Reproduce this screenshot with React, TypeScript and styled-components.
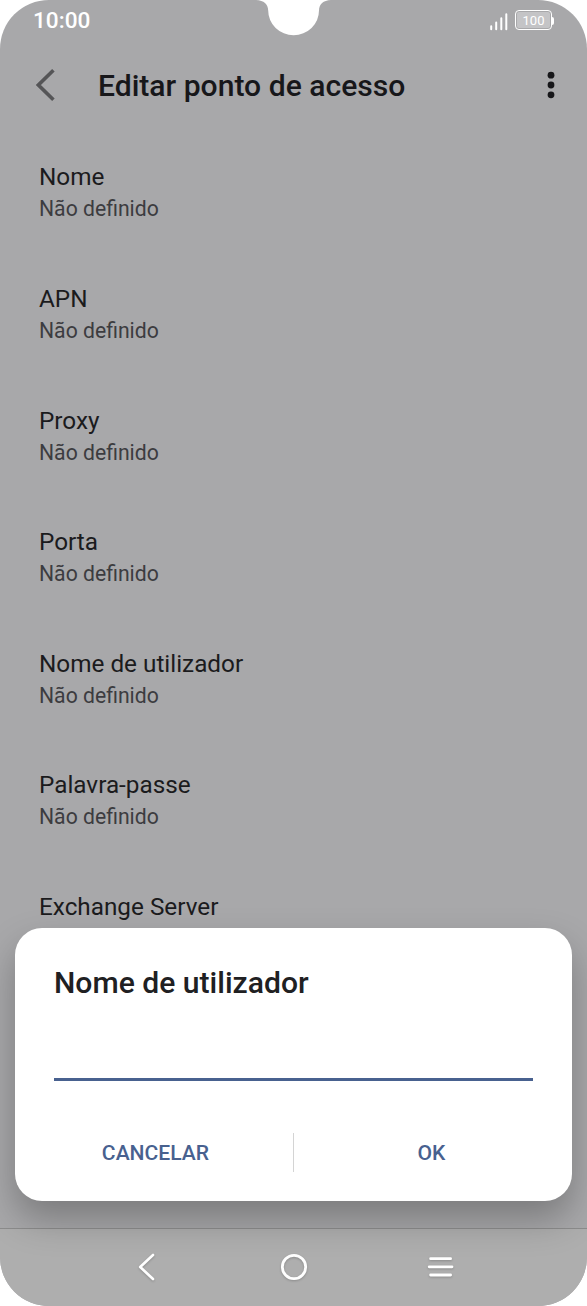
import React from 'react';
import styled, { createGlobalStyle } from 'styled-components';

const settings = [
  'Nome',
  'APN',
  'Proxy',
  'Porta',
  'Nome de utilizador',
  'Palavra-passe',
  'Exchange Server',
];

const App: React.FC = () => {
  return (
    <>
      <GlobalStyle />
      <Screen>
        <Notch viewBox="0 0 76 36">
          <path d="M0 0C8 0.4 12 4 12.2 10.5A25.4 24.7 0 0 0 63 10.5C63.2 4 67 0.4 75 0Z" />
        </Notch>
        <StatusBar>
          <Clock>10:00</Clock>
          <StatusIcons>
            <svg width="18" height="18" viewBox="0 0 18 18">
              <path
                d="M1.2 16.2V13.2M6.2 16.2V9.6M11.3 16.2V5.2M16.3 16.2V1.2"
                stroke="#fff"
                strokeWidth="2"
                strokeLinecap="round"
              />
            </svg>
            <Battery>
              <BatteryLevel>100</BatteryLevel>
            </Battery>
            <BatteryTip />
          </StatusIcons>
        </StatusBar>
        <Header>
          <BackButton aria-label="Voltar">
            <svg width="20" height="34" viewBox="0 0 20 34">
              <path d="M17.4 2.2L2.4 17L17.4 31.8" fill="none" stroke="#555557" strokeWidth="3.6" />
            </svg>
          </BackButton>
          <Title>Editar ponto de acesso</Title>
          <MoreButton aria-label="Mais">
            <svg width="8" height="28" viewBox="0 0 8 28" fill="#17171a">
              <circle cx="4" cy="4.2" r="3.4" />
              <circle cx="4" cy="14" r="3.4" />
              <circle cx="4" cy="23.8" r="3.4" />
            </svg>
          </MoreButton>
        </Header>
        <List>
          {settings.map((name) => (
            <Row key={name}>
              <RowName>{name}</RowName>
              <RowValue>Não definido</RowValue>
            </Row>
          ))}
        </List>
        <NavBar>
          <svg width="28" height="34" viewBox="0 0 28 34">
            <path
              d="M20 5L7.2 17L20 29"
              fill="none"
              stroke="#fff"
              strokeWidth="2.6"
              strokeLinecap="round"
              strokeLinejoin="round"
            />
          </svg>
          <svg width="28" height="34" viewBox="0 0 28 34">
            <circle cx="14" cy="17" r="11.7" fill="none" stroke="#fff" strokeWidth="2.8" />
          </svg>
          <svg width="28" height="34" viewBox="0 0 28 34">
            <path
              d="M3.6 8.7H23.6M2.2 16.8H25M3.6 25H23.6"
              stroke="#fff"
              strokeWidth="2.8"
              strokeLinecap="round"
            />
          </svg>
        </NavBar>
        <Dialog role="dialog">
          <DialogTitle>Nome de utilizador</DialogTitle>
          <Input aria-label="Nome de utilizador" />
          <Actions>
            <Action>CANCELAR</Action>
            <Separator />
            <Action>OK</Action>
          </Actions>
        </Dialog>
      </Screen>
    </>
  );
};

export default App;

const GlobalStyle = createGlobalStyle`
  * {
    box-sizing: border-box;
  }
  body {
    margin: 0;
    background: #fff;
    font-family: Roboto, sans-serif;
  }
  button {
    padding: 0;
    border: none;
    background: none;
    font-family: inherit;
  }
  svg {
    display: block;
    flex-shrink: 0;
  }
`;

const Screen = styled.div`
  position: relative;
  display: flex;
  flex-direction: column;
  width: 587px;
  height: 1306px;
  overflow: hidden;
  border-radius: 49px;
  background: #a8a8aa;
`;

const Notch = styled.svg`
  position: absolute;
  top: 0;
  left: 256px;
  width: 76px;
  height: 36px;
  fill: #fff;
`;

const StatusBar = styled.div`
  display: flex;
  flex-shrink: 0;
  justify-content: space-between;
  align-items: center;
  height: 41px;
  padding: 0 33px;
`;

const Clock = styled.span`
  color: #fff;
  font-size: 22.6px;
  font-weight: 500;
  line-height: 26px;
`;

const StatusIcons = styled.div`
  display: flex;
  align-items: center;

  svg {
    margin: 2px 7px 0 0;
  }
`;

const Battery = styled.div`
  width: 37px;
  height: 20px;
  margin-top: -1px;
  padding: 1px;
  border: 1.5px solid #fff;
  border-radius: 4px;
`;

const BatteryLevel = styled.div`
  height: 100%;
  border-radius: 2px;
  background: #c4c4c6;
  color: #fff;
  font-size: 13px;
  line-height: 17px;
  text-align: center;
`;

const BatteryTip = styled.div`
  width: 2px;
  height: 8px;
  border-radius: 0 2px 2px 0;
  background: #fff;
`;

const Header = styled.header`
  display: flex;
  flex-shrink: 0;
  align-items: center;
  height: 88px;
  padding: 0 32px 0 36px;
`;

const BackButton = styled.button`
  width: 62px;
`;

const Title = styled.h1`
  flex: 1;
  margin: 0;
  padding-top: 1px;
  color: #17171a;
  font-size: 30.1px;
  font-weight: 500;
  line-height: 36px;
  white-space: nowrap;
`;

const MoreButton = styled.button`
  width: 8px;
`;

const List = styled.main`
  flex: 1;
  min-height: 0;
  overflow: hidden;
  padding-top: 3.2px;
`;

const Row = styled.div`
  display: flex;
  flex-direction: column;
  justify-content: center;
  height: 121.6px;
  padding: 0 39px;
`;

const RowName = styled.div`
  color: #1b1b1d;
  font-size: 24.3px;
  line-height: 32px;
`;

const RowValue = styled.div`
  color: #3c3c40;
  font-size: 21.2px;
  line-height: 31px;
`;

const NavBar = styled.nav`
  display: flex;
  flex-shrink: 0;
  justify-content: center;
  align-items: center;
  gap: 119px;
  height: 78px;
  padding-bottom: 2px;
  border-top: 1px solid #8c8c8c;
  background: #aeaeae;

  svg {
    filter: drop-shadow(0 1px 1px rgba(0, 0, 0, 0.2));
  }
`;

const Dialog = styled.div`
  position: absolute;
  top: 928px;
  left: 15px;
  display: flex;
  flex-direction: column;
  width: 557px;
  height: 273px;
  padding: 37px 39px 29px;
  border-radius: 27px;
  background: #fff;
  box-shadow: 0 18px 36px rgba(0, 0, 0, 0.27);
`;

const DialogTitle = styled.h2`
  margin: 0;
  color: #202022;
  font-size: 30.1px;
  font-weight: 500;
  line-height: 36px;
`;

const Input = styled.input`
  height: 49px;
  margin-top: 31px;
  padding: 0;
  border: none;
  border-bottom: 3px solid #48618f;
  outline: none;
  background: transparent;
  font-size: 24px;
`;

const Actions = styled.div`
  display: flex;
  align-items: center;
  height: 39px;
  margin: auto -36px 0;
`;

const Action = styled.button`
  flex: 1;
  color: #48618f;
  font-size: 21.1px;
  font-weight: 500;
  line-height: 39px;
`;

const Separator = styled.div`
  width: 1px;
  height: 100%;
  background: #d4d4d4;
`;
